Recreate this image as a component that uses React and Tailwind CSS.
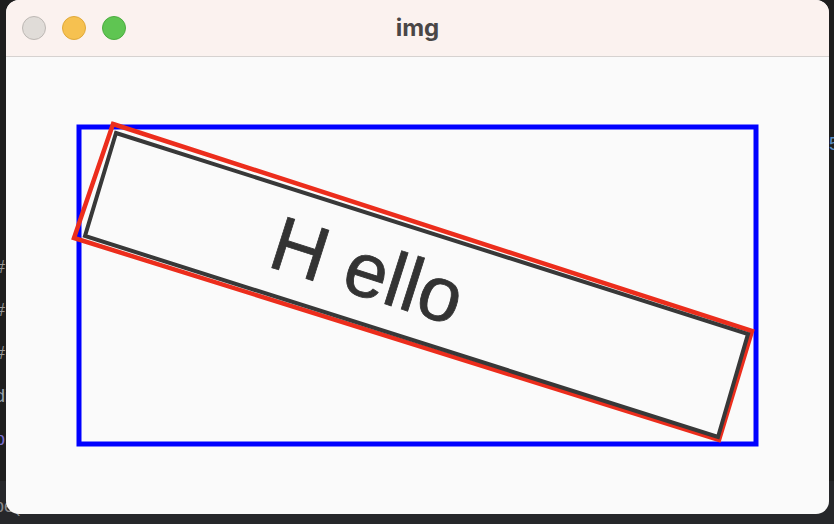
const codeLines = [
  { text: "#", color: "text-[#9a9a9a]" },
  { text: "#", color: "text-[#9a9a9a]" },
  { text: "#", color: "text-[#9a9a9a]" },
  { text: "di", color: "text-[#9aa4b0]" },
  { text: "p", color: "text-[#7b6fd0]" },
];

export default function App() {
  return (
    <div className="relative w-[834px] h-[524px] overflow-hidden bg-[#1e1e1e] font-['Liberation_Sans',Arial,sans-serif]">
      {/* editor behind the window */}
      <div className="flex flex-col h-full">
        <div className="flex justify-end h-[153px] items-end">
          <span className="text-[18px] leading-none text-[#5b8fc4] -mr-[5px]">5</span>
        </div>
        <div className="flex flex-col gap-[25px] pt-[105px] -ml-[5px]">
          {codeLines.map((l, i) => (
            <span key={i} className={`text-[18px] leading-none ${l.color}`}>
              {l.text}
            </span>
          ))}
        </div>
        <div className="mt-auto h-[43px] bg-[#26272a] flex items-start pt-[16px] -ml-[6px]">
          <span className="text-[18px] leading-none text-[#8a8a8a]">pe(</span>
        </div>
      </div>

      {/* window */}
      <div className="absolute left-[6px] top-0 w-[823px] h-[514px] rounded-[13px] overflow-hidden bg-[#fafafa] flex flex-col">
        <div className="relative h-[57px] shrink-0 bg-[#fbf2ef] border-b border-[#d6d2d0] flex items-center">
          <div className="flex items-center gap-[16px] pl-[16px]">
            <span className="w-[24px] h-[24px] rounded-full bg-[#e0dcd8] border border-[#bdb8b4]" />
            <span className="w-[24px] h-[24px] rounded-full bg-[#f6c150] border border-[#e0a93a]" />
            <span className="w-[24px] h-[24px] rounded-full bg-[#5fc552] border border-[#4cad40]" />
          </div>
          <div className="absolute inset-0 flex items-center justify-center pb-[1px] text-[24px] font-bold text-[#4a4747] font-['Inter',sans-serif]">
            img
          </div>
        </div>
        <div className="flex-1">
          <svg width="823" height="457" viewBox="6 57 823 457" className="block">
            <rect x="79" y="127" width="677" height="317" fill="none" stroke="#0000ff" strokeWidth="5" />
            <polygon points="113,124 752,331 719,440 74,238" fill="none" stroke="#ec2d1c" strokeWidth="4.5" />
            <polygon points="116,133 748,334 718,437 85,236" fill="none" stroke="#383838" strokeWidth="4" />
            <text
              x="0"
              y="0"
              transform="translate(116 133) rotate(17.7) translate(183 81)"
              fontFamily="Liberation Sans, Arial, sans-serif"
              fontSize="77"
              fill="#333333"
              stroke="#333333"
              strokeWidth="0.8"
            >
              H ello
            </text>
          </svg>
        </div>
      </div>
    </div>
  );
}
